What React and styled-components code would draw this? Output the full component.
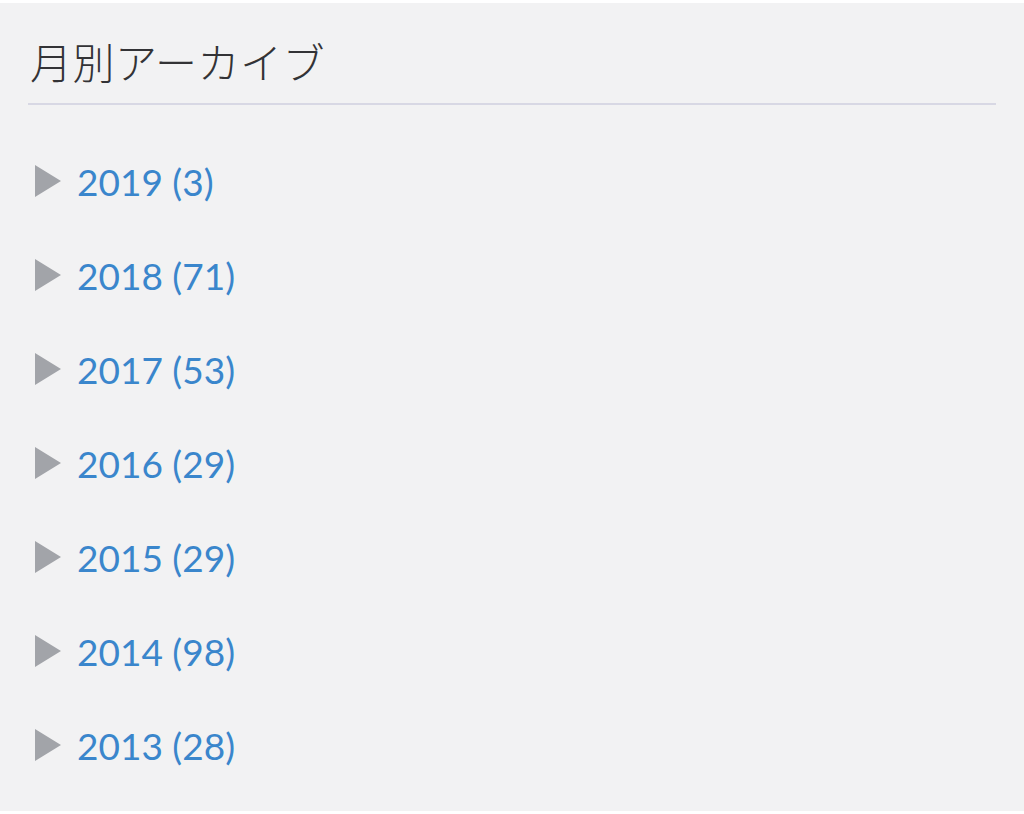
import React from 'react';
import styled, { createGlobalStyle } from 'styled-components';

const GlobalStyle = createGlobalStyle`
  html, body {
    margin: 0;
    padding: 0;
    background: #ffffff;
  }
`;

const Panel = styled.section`
  margin-top: 3px;
  height: 808px;
  background: #f2f2f3;
  padding: 0 28px 0 28px;
  box-sizing: border-box;
  font-family: "Lato", "Noto Sans", sans-serif;
`;

const Title = styled.h2`
  margin: 0;
  padding: 34px 0 18px 2px;
  font-family: "Noto Sans CJK JP", sans-serif;
  font-weight: 300;
  font-size: 42px;
  line-height: 48px;
  color: #333336;
  letter-spacing: 0.5px;
  border-bottom: 2px solid #d8d8e4;
`;

const List = styled.ul`
  list-style: none;
  margin: 0;
  padding: 52px 0 0 7px;
  display: flex;
  flex-direction: column;
  gap: 46px;
`;

const Row = styled.li`
  display: flex;
  align-items: center;
  gap: 16px;
  height: 48px;
`;

const Arrow = styled.span`
  width: 0;
  height: 0;
  border-top: 16px solid transparent;
  border-bottom: 16px solid transparent;
  border-left: 26px solid #a2a4a9;
`;

const YearLink = styled.a`
  color: #3a86cc;
  font-size: 37px;
  text-decoration: none;
`;

const years = [
  ['2019', 3],
  ['2018', 71],
  ['2017', 53],
  ['2016', 29],
  ['2015', 29],
  ['2014', 98],
  ['2013', 28],
];

export default function App() {
  return (
    <>
      <GlobalStyle />
      <Panel>
        <Title>月別アーカイブ</Title>
        <List>
          {years.map(([y, n]) => (
            <Row key={y}>
              <Arrow />
              <YearLink href="#">{y} ({n})</YearLink>
            </Row>
          ))}
        </List>
      </Panel>
    </>
  );
}
